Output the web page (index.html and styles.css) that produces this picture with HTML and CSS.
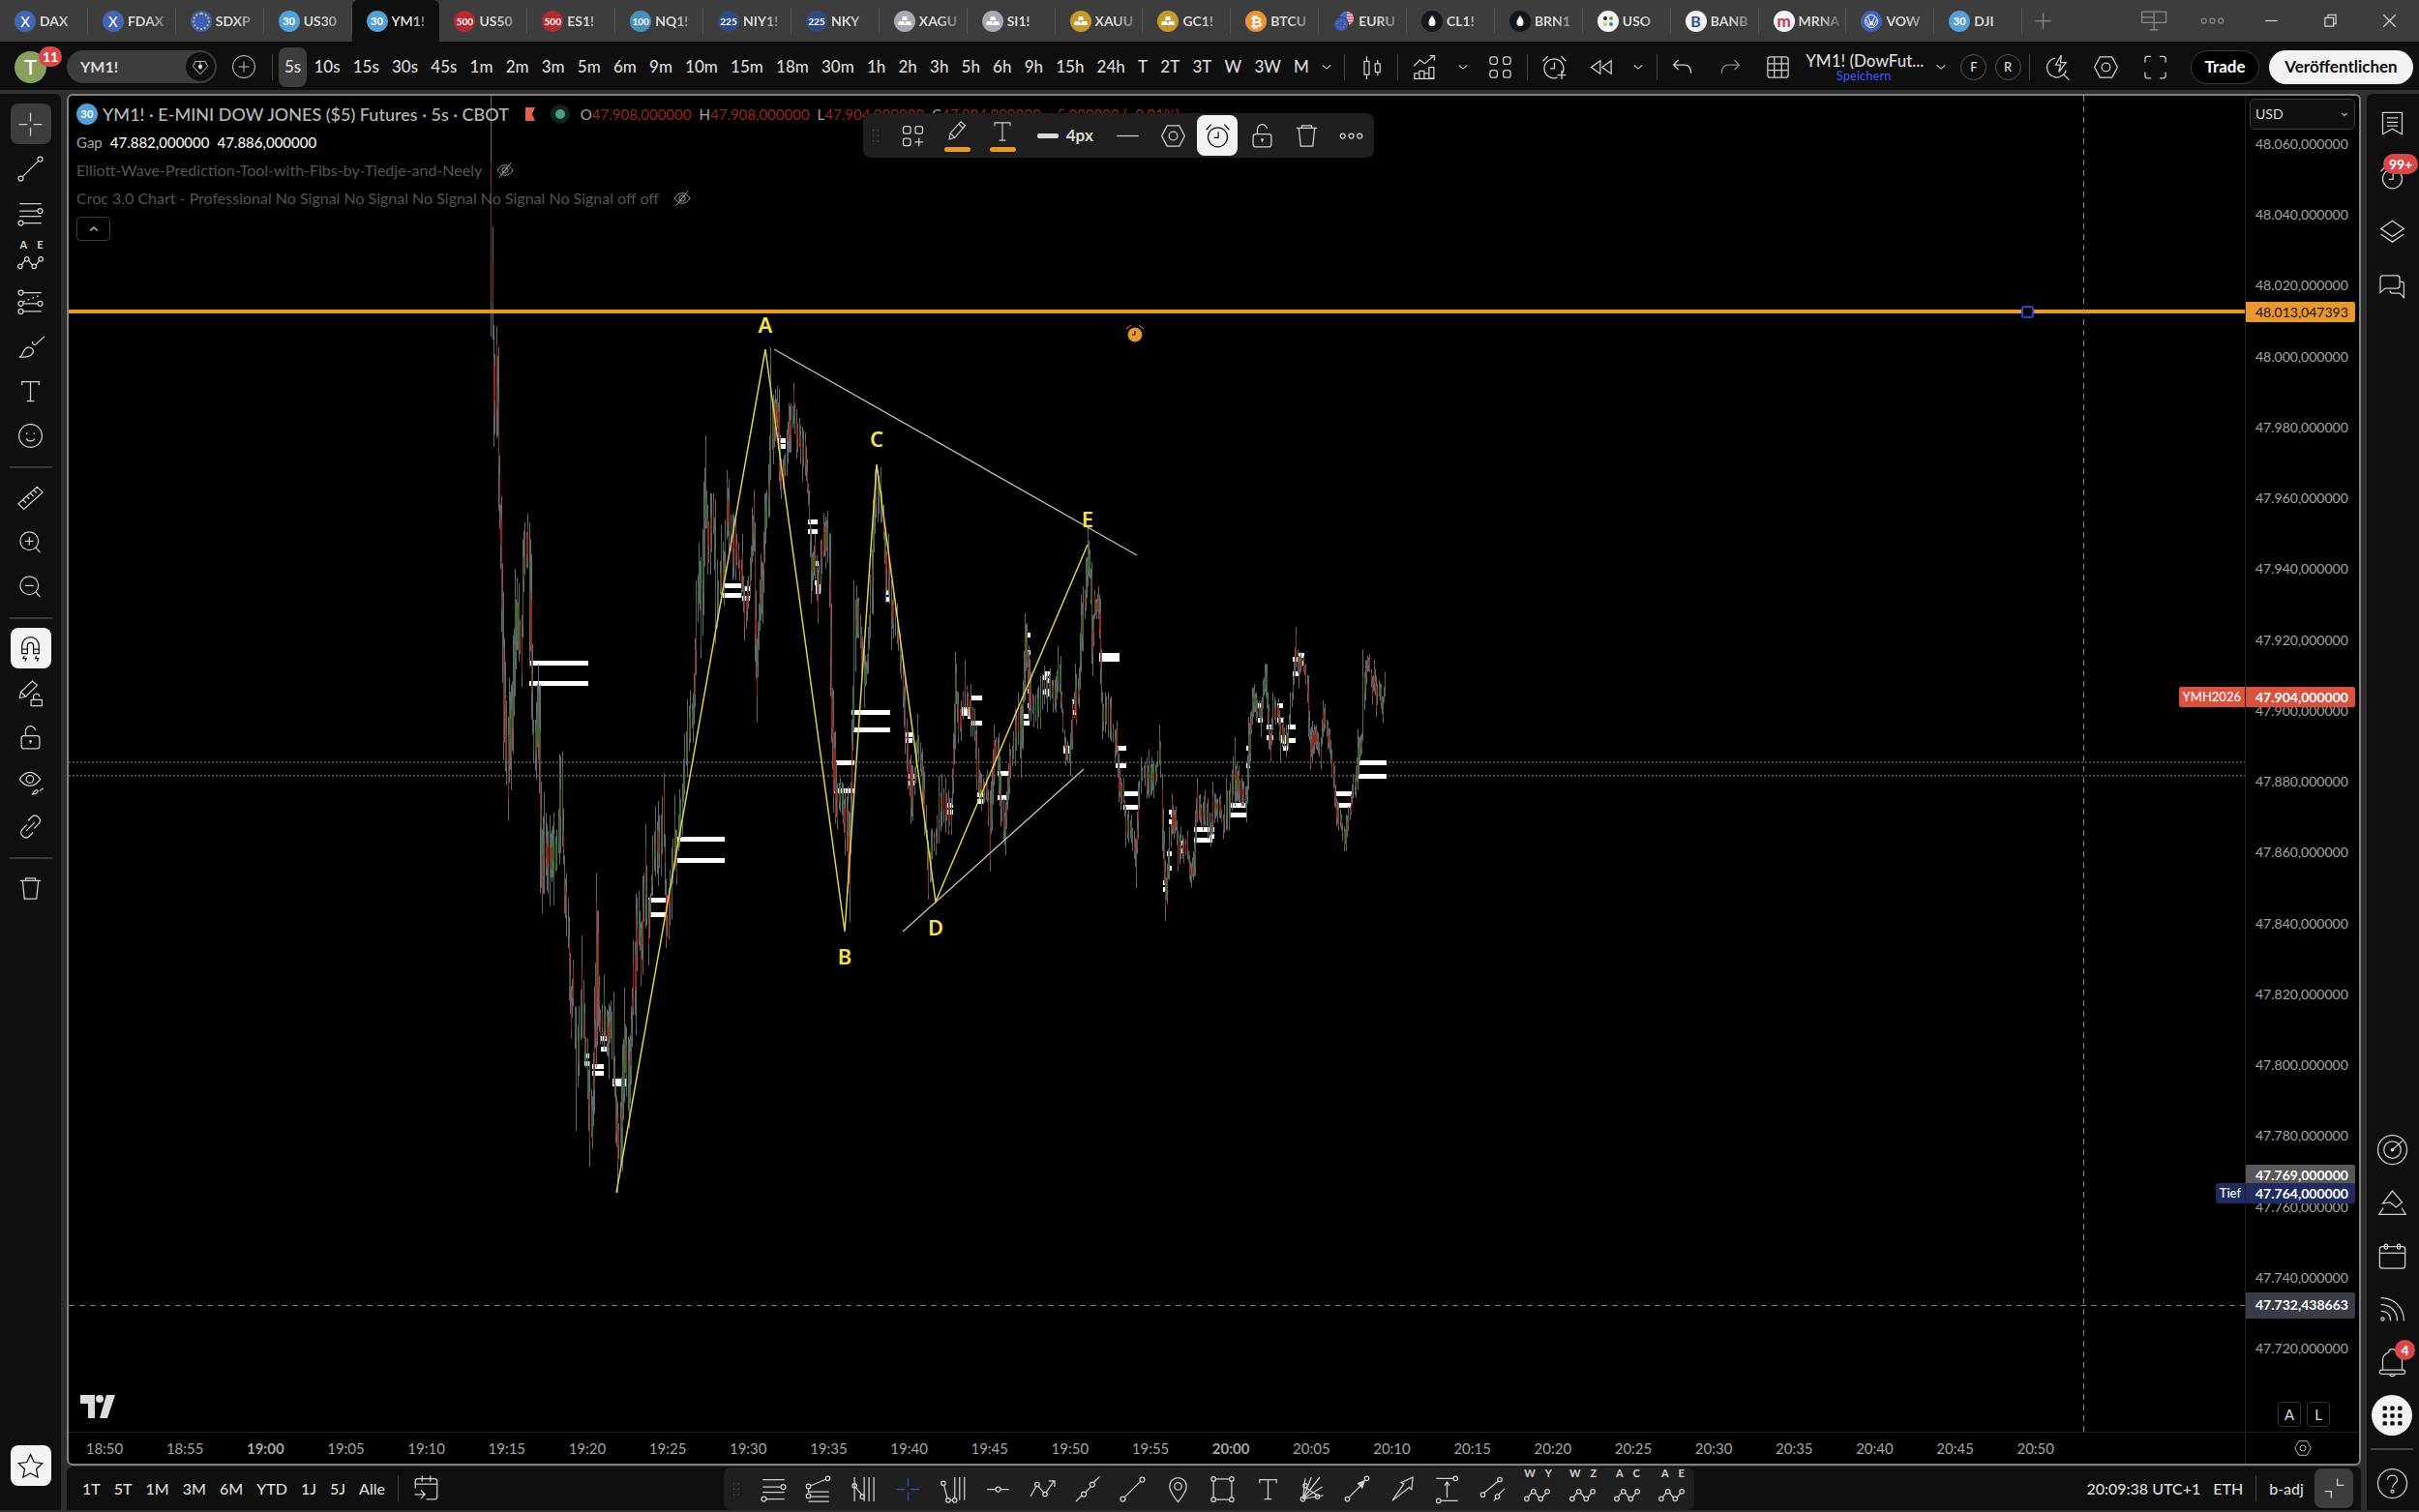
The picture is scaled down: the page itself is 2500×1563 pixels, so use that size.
FILE: index.html
```html
<!DOCTYPE html>
<html lang="de">
<head>
<meta charset="utf-8">
<title>YM1! Chart</title>
<link rel="stylesheet" href="styles.css">
</head>
<body>
<svg class="defs" aria-hidden="true">
  <symbol id="i-chev" viewBox="0 0 28 28"><path d="M10 12.5l4 3.5 4-3.5"/></symbol>
  <symbol id="i-plus" viewBox="0 0 28 28"><path d="M14 7.500v13M7.500 14h13"/></symbol>
  <symbol id="i-dots" viewBox="0 0 28 28"><circle cx="7" cy="14" r="2"/><circle cx="14" cy="14" r="2"/><circle cx="21" cy="14" r="2"/></symbol>
  <symbol id="i-panel" viewBox="0 0 28 28"><path d="M4.500 6.500h20v9h-20zM14.500 6.500v15M11 21.500h7M4.500 11h10"/></symbol>
  <symbol id="i-min" viewBox="0 0 28 28"><path d="M9 14h10"/></symbol>
  <symbol id="i-restore" viewBox="0 0 28 28"><path d="M9.500 11.500h7v7h-7zM12 11.500v-2.500h6.500v7.500h-2"/></symbol>
  <symbol id="i-close" viewBox="0 0 28 28"><path d="M9 9l10 10M19 9L9 19"/></symbol>
  <symbol id="i-gem" viewBox="0 0 28 28"><path d="M8 7.500h12l3 6L14 23 5 13.500zM14 8v9"/><circle cx="14" cy="14" r="2.500" class="f"/></symbol>
  <symbol id="i-candles" viewBox="0 0 28 28"><path d="M8 9h4v11H8zM10 5v4M10 20v4M17 11h4v7h-4zM19 8v3M19 18v3"/></symbol>
  <symbol id="i-ind" viewBox="0 0 28 28"><path d="M5 13l5-5 4 3 7-6M18 4.500h4v4M5.500 23v-4h4v4M9.500 23v-6h4v6M13.500 23v-4h4v4M17.500 23V14h4v9zM5 23.500h17"/></symbol>
  <symbol id="i-grid4" viewBox="0 0 28 28"><rect x="5.500" y="5.500" width="6" height="6" rx="2"/><rect x="16.500" y="5.500" width="6" height="6" rx="2"/><rect x="5.500" y="16.500" width="6" height="6" rx="2"/><rect x="16.500" y="16.500" width="6" height="6" rx="2"/></symbol>
  <symbol id="i-gridplus" viewBox="0 0 28 28"><rect x="6" y="6" width="6" height="6" rx="1.500"/><rect x="16" y="6" width="6" height="6" rx="1.500"/><rect x="6" y="16" width="6" height="6" rx="1.500"/><path d="M19 15.500v7M15.500 19h7"/></symbol>
  <symbol id="i-alarmplus" viewBox="0 0 28 28"><path d="M20.500 19a8 8 0 1 0-4 3.500M4.500 9l4-4M23.500 9l-4-4M14 10v5h-3.500M20 17v7M16.500 20.500h7"/></symbol>
  <symbol id="i-alarm" viewBox="0 0 28 28"><circle cx="14" cy="15" r="8"/><path d="M4.500 9l4-4.500M23.500 9l-4-4.500M14.500 10.500v5H11"/></symbol>
  <symbol id="i-replay" viewBox="0 0 28 28"><path d="M13.500 8.500v11L6 14zM22.500 8.500v11L15 14z"/></symbol>
  <symbol id="i-undo" viewBox="0 0 28 28"><path d="M10 8l-4 4 4 4M6 12h9c4 0 5.500 2.500 5.500 7"/></symbol>
  <symbol id="i-redo" viewBox="0 0 28 28"><path d="M18 8l4 4-4 4M22 12h-9c-4 0-5.500 2.500-5.500 7"/></symbol>
  <symbol id="i-table" viewBox="0 0 28 28"><rect x="5.500" y="5.500" width="17" height="17" rx="2"/><path d="M11 5.500v17M17 5.500v17M5.500 11h17M5.500 16.500h17"/></symbol>
  <symbol id="i-quick" viewBox="0 0 28 28"><path d="M12 6.500a8 8 0 1 0 9 10M18.500 19.500l5 5M17 4l-4.500 8h4L15 18l6-8h-4.500z"/></symbol>
  <symbol id="i-hex" viewBox="0 0 28 28"><path d="M9 5.500h10l4.500 8.500L19 22.500H9L4.500 14z"/><circle cx="14" cy="14" r="3.500"/></symbol>
  <symbol id="i-full" viewBox="0 0 28 28"><path d="M5.500 10V7a2 2 0 0 1 2-2h3M17.500 5h3a2 2 0 0 1 2 2v3M22.500 18v3a2 2 0 0 1-2 2h-3M10.500 23h-3a2 2 0 0 1-2-2v-3"/></symbol>
  <symbol id="i-cross" viewBox="0 0 28 28"><path d="M14 4.500v7M14 16.500v7M4.500 14h7M16.500 14h7"/></symbol>
  <symbol id="i-line" viewBox="0 0 28 28"><circle cx="6" cy="22" r="2"/><circle cx="22" cy="6" r="2"/><path d="M7.500 20.500l13-13"/></symbol>
  <symbol id="i-fib" viewBox="0 0 28 28"><path d="M5 6h18M5 12h15M5 16.500h18M8 22h15"/><circle cx="22" cy="12" r="2"/><circle cx="6" cy="22" r="2"/></symbol>
  <symbol id="i-wave" viewBox="0 0 28 28"><path d="M6.500 20l3-4M12.500 16l3 4M18.500 20l3-4"/><circle cx="5.500" cy="21" r="1.800"/><circle cx="11" cy="15" r="1.800"/><circle cx="17" cy="21" r="1.800"/><circle cx="22.500" cy="15" r="1.800"/></symbol>
  <symbol id="i-proj" viewBox="0 0 28 28"><path d="M8 6h15M8 15h12M8 21.500h15"/><path d="M8 13.500l13-5" stroke-dasharray="1.500 2.500"/><circle cx="6" cy="6" r="2"/><circle cx="6" cy="15" r="2"/><circle cx="22" cy="15" r="2"/><circle cx="6" cy="21.500" r="2"/></symbol>
  <symbol id="i-brush" viewBox="0 0 28 28"><path d="M4.500 22.500c4 0 2.500-8 8-8 3 0 4.500 2 3.500 4.500-1.500 3.500-6.500 3.500-11.500 3.500zM25.500 5.500L18.500 12c-1.500 1-3.500-.5-2.500-2.500"/></symbol>
  <symbol id="i-text" viewBox="0 0 28 28"><path d="M7 9V6h14v3M14 6v16M11 22h6"/></symbol>
  <symbol id="i-smile" viewBox="0 0 28 28"><circle cx="14" cy="14" r="9.500"/><path d="M10.500 16.500c1.500 2.500 5.500 2.500 7 0"/><circle cx="11" cy="12" r=".7" class="f"/><circle cx="17" cy="12" r=".7" class="f"/></symbol>
  <symbol id="i-ruler" viewBox="0 0 28 28"><path d="M4 19L19.500 5l4.500 4.500L8.500 23.500zM8 16l2.500 2.500M11 13l2 2M14 10.500l2.500 2.500M17 8l2 2"/></symbol>
  <symbol id="i-zin" viewBox="0 0 28 28"><circle cx="13" cy="13" r="7.500"/><path d="M18.500 18.500l3.500 4M13 9.500v7M9.500 13h7"/></symbol>
  <symbol id="i-zout" viewBox="0 0 28 28"><circle cx="13" cy="13" r="7.500"/><path d="M18.500 18.500l3.500 4M9.500 13h7"/></symbol>
  <symbol id="i-magnet" viewBox="0 0 28 28"><path d="M7 18v-6.500a7 7 0 0 1 14 0V18h-4.500v-6.500a2.500 2.500 0 0 0-5 0V18zM7 14.500h4.500M16.500 14.500H21M9 20l-1 2h2.500l-1 2.500M19 20l-1 2h2.500l-1 2.500"/></symbol>
  <symbol id="i-penlock" viewBox="0 0 28 28"><path d="M5 18l1-5L15.500 4l4 3.500L10 17zM6 13l4 4M14.500 19.500h9v5h-9zM16.500 19.500v-2a2.500 2.500 0 0 1 5-.5"/></symbol>
  <symbol id="i-lock" viewBox="0 0 28 28"><rect x="6.500" y="12.500" width="15" height="10.500" rx="2"/><path d="M10 12.500V9a4 4 0 0 1 8-1M14 16v3" /><circle cx="14" cy="17" r="1" class="f"/></symbol>
  <symbol id="i-eye" viewBox="0 0 28 28"><path d="M5 11.500c5-7.500 12-7.500 17 0-5 7.500-12 7.500-17 0zM15 24c2 0 1.500-3.500 4-3.500 2 0 1.500 3.500-4 3.500zM24.500 19l-3 2.500"/><circle cx="13.500" cy="11.500" r="3"/></symbol>
  <symbol id="i-link" viewBox="0 0 28 28"><path d="M12 9l3-3c3-3 9 1 6 5.500l-4 4M16 19l-3 3c-3 3-9-1-6-5.500l4-4M10.500 17.500l7-7"/></symbol>
  <symbol id="i-trash" viewBox="0 0 28 28"><path d="M5.500 7.500h17M10 7V5.500h8V7M7.500 8l1.500 14.500h10L20.500 8"/></symbol>
  <symbol id="i-star" viewBox="0 0 28 28"><path d="M14 4.500l3 6.300 6.800.9-5 4.700 1.300 6.900-6.100-3.400-6.100 3.400 1.300-6.900-5-4.700 6.800-.9z"/></symbol>
  <symbol id="i-book" viewBox="0 0 28 28"><path d="M6 5h16v18l-8-4.500L6 23zM9.500 9.500h9M9.500 13h9M9.500 16h9"/></symbol>
  <symbol id="i-layers" viewBox="0 0 28 28"><path d="M14 5l9.500 6.500L14 18l-9.500-6.500zM4.500 16L14 22.500 23.500 16"/></symbol>
  <symbol id="i-chat" viewBox="0 0 28 28"><path d="M6 5.500h12a2 2 0 0 1 2 2V14a2 2 0 0 1-2 2H8l-4 3.500v-12a2 2 0 0 1 2-2zM20 10.500h1.500a2 2 0 0 1 2 2v11l-3.500-3.500h-6a2 2 0 0 1-2-2"/></symbol>
  <symbol id="i-target" viewBox="0 0 28 28"><circle cx="14" cy="14" r="12"/><circle cx="14" cy="14" r="7"/><circle cx="14" cy="14" r="1.500" class="f"/><path d="M14 14l8.500-7.500"/></symbol>
  <symbol id="i-pyr" viewBox="0 0 28 28"><path d="M6 14.500l8-10.500 8 9.500-5 4-5-4zM6.500 18L3 23.500h22L21.500 18"/></symbol>
  <symbol id="i-cal" viewBox="0 0 28 28"><rect x="3.500" y="6" width="21" height="18" rx="2"/><path d="M3.500 11.500h21"/><rect x="7.500" y="4" width="2.500" height="4" rx="1"/><rect x="18" y="4" width="2.500" height="4" rx="1"/></symbol>
  <symbol id="i-rss" viewBox="0 0 28 28"><path d="M4.500 4.500c11 0 19 8 19 19M4.500 10c8 0 13.500 5.500 13.500 13.500M4.500 15.500c5 0 8 3 8 8"/><circle cx="6" cy="22" r="1.300"/></symbol>
  <symbol id="i-bell" viewBox="0 0 28 28"><path d="M6 20v-8c0-4 2.500-5.500 5-6.500 0-3.500 6-3.500 6 0 2.500 1 5 2.500 5 6.500v8M11.500 23.500c1 2.500 4 2.500 5 0"/><rect x="3.500" y="20" width="21" height="3.500" rx="1.700"/></symbol>
  <symbol id="i-apps" viewBox="0 0 28 28"><g class="f"><rect x="6" y="6" width="3.500" height="3.500" rx="1"/><rect x="12.200" y="6" width="3.500" height="3.500" rx="1"/><rect x="18.500" y="6" width="3.500" height="3.500" rx="1"/><rect x="6" y="12.200" width="3.500" height="3.500" rx="1"/><rect x="12.200" y="12.200" width="3.500" height="3.500" rx="1"/><rect x="18.500" y="12.200" width="3.500" height="3.500" rx="1"/><rect x="6" y="18.500" width="3.500" height="3.500" rx="1"/><rect x="12.200" y="18.500" width="3.500" height="3.500" rx="1"/><rect x="18.500" y="18.500" width="3.500" height="3.500" rx="1"/></g></symbol>
  <symbol id="i-help" viewBox="0 0 28 28"><circle cx="14" cy="14" r="12"/><path d="M10 11c0-5 8-5 8 0 0 3-4 3-4 6.500"/><circle cx="14" cy="20.500" r="1.200"/></symbol>
  <symbol id="i-pencil" viewBox="0 0 28 28"><path d="M7 21l1-5.500L17.500 5l4 3.500L12 19.500zM15.500 7l4 4M8 15.500l4 4"/></symbol>
  <symbol id="i-hline" viewBox="0 0 28 28"><path d="M5 14h18"/></symbol>
  <symbol id="i-handle" viewBox="0 0 28 28"><path d="M11.500 7v14M16.500 7v14" stroke-dasharray="1.500 4.500"/></symbol>
  <symbol id="i-goto" viewBox="0 0 28 28"><path d="M5 14V8a2 2 0 0 1 2-2h14a2 2 0 0 1 2 2v13a2 2 0 0 1-2 2h-7M5 10.500h18M10.500 3.500v5M17.500 3.500v5M4.500 19h8M9.500 15.500l3.500 3.500-3.500 3.500"/></symbol>
  <symbol id="i-collapse" viewBox="0 0 28 28"><path d="M16.500 6v5.500H22M6 16.500h5.500V22"/></symbol>
  <symbol id="i-hidden" viewBox="0 0 28 28"><path d="M4 14c5-9 15-9 20 0-5 9-15 9-20 0zM6 24L22 4M11 18l6-8"/><circle cx="14" cy="14" r="4"/></symbol>
  <symbol id="i-fibext" viewBox="0 0 28 28"><path d="M8 11l12-5M6 13v4M8 20h15M6 16h17M6 24h17"/><circle cx="22" cy="5" r="1.800"/><circle cx="6" cy="11.500" r="1.800"/><circle cx="6" cy="19.500" r="1.800"/></symbol>
  <symbol id="i-cyc" viewBox="0 0 28 28"><path d="M6.500 4v20M14.500 4v20M18.500 4v20M22.500 4v20M7.500 12.500l5 6"/><circle cx="6.500" cy="11" r="1.800"/><circle cx="13" cy="20" r="1.800"/></symbol>
  <symbol id="i-pitch" viewBox="0 0 28 28"><path d="M6 10.500l3 11.500M11 23h2M15 22V4M19 4v19M23 4v19"/><circle cx="5.500" cy="9" r="1.800"/><circle cx="9.500" cy="23" r="1.800"/><circle cx="15" cy="23" r="1.800"/></symbol>
  <symbol id="i-hnode" viewBox="0 0 28 28"><path d="M5 14h7M16 14h7"/><circle cx="14" cy="14" r="2"/></symbol>
  <symbol id="i-trend" viewBox="0 0 28 28"><path d="M4 20l5-9M10.500 11.500l5 6M17 16.500L23.500 7M19 7h5v5"/><circle cx="16" cy="18" r="1.800"/><circle cx="9.500" cy="10" r="1.800"/></symbol>
  <symbol id="i-ext" viewBox="0 0 28 28"><path d="M4 24l5-5M12 16.500l4.500-5M19 8l4.500-4.500"/><circle cx="10.500" cy="18" r="2"/><circle cx="17.500" cy="10" r="2"/></symbol>
  <symbol id="i-pin" viewBox="0 0 28 28"><path d="M14 24.500c-4-5-7-9-7-13a7 7 0 0 1 14 0c0 4-3 8-7 13z"/><circle cx="14" cy="11.500" r="3"/></symbol>
  <symbol id="i-rect" viewBox="0 0 28 28"><path d="M8 5.500h12M8 22.500h12M6.500 7v14M21.500 7v14"/><circle cx="6.500" cy="5.500" r="1.800"/><circle cx="21.500" cy="5.500" r="1.800"/><circle cx="6.500" cy="22.500" r="1.800"/><circle cx="21.500" cy="22.500" r="1.800"/></symbol>
  <symbol id="i-fan" viewBox="0 0 28 28"><path d="M6 22L8 5M6 22L13 4M6 22L20 4M6 22L22 12M6 22l17-3M9 13l9 6"/><circle cx="6" cy="22" r="1.800"/><circle cx="8" cy="11" r="1.800"/><circle cx="18" cy="20" r="1.800"/></symbol>
  <symbol id="i-arrow" viewBox="0 0 28 28"><path d="M7.500 20.500L18 10"/><path d="M14 9l7-3-2.500 7.500z" class="f"/><circle cx="6" cy="22" r="1.800"/><circle cx="22" cy="5" r="1.800"/></symbol>
  <symbol id="i-bigarrow" viewBox="0 0 28 28"><path d="M5.500 23.500L15 9.500l-2-1 9.500-4.500-1 10-2-1.500z"/></symbol>
  <symbol id="i-range" viewBox="0 0 28 28"><path d="M5 5h14M9 23.500h14M14 8v13M12 11l2-3 2 3"/><circle cx="21" cy="5" r="1.800"/><circle cx="7" cy="23.500" r="1.800"/></symbol>
  <symbol id="i-chan" viewBox="0 0 28 28"><path d="M7 17L19 7M15 23.500l2-2M19 18.500l5-5"/><circle cx="20" cy="6" r="1.800"/><circle cx="6" cy="18.500" r="1.800"/><circle cx="18" cy="20" r="1.800"/></symbol>
</svg>

<div class="app">
  <nav class="tabs" aria-label="Tabs">
    <a class="tab" href="#"><i class="coin c-dax">X</i><span>DAX</span></a>
    <a class="tab" href="#"><i class="coin c-dax">X</i><span>FDAX</span></a>
    <a class="tab" href="#"><i class="coin c-eu"></i><span>SDXP</span></a>
    <a class="tab" href="#"><i class="coin c-30">30</i><span>US30</span></a>
    <a class="tab on" href="#"><i class="coin c-30">30</i><span>YM1!</span></a>
    <a class="tab" href="#"><i class="coin c-500">500</i><span>US50</span></a>
    <a class="tab" href="#"><i class="coin c-500">500</i><span>ES1!</span></a>
    <a class="tab" href="#"><i class="coin c-100">100</i><span>NQ1!</span></a>
    <a class="tab" href="#"><i class="coin c-225">225</i><span>NIY1!</span></a>
    <a class="tab" href="#"><i class="coin c-225">225</i><span>NKY</span></a>
    <a class="tab" href="#"><i class="coin c-ag"><svg viewBox="0 0 22 22"><path d="M9 6h4l1 4H8zM5 11h5l1 4H4zM12 11h5l1 4h-7z"/></svg></i><span>XAGU</span></a>
    <a class="tab" href="#"><i class="coin c-ag"><svg viewBox="0 0 22 22"><path d="M9 6h4l1 4H8zM5 11h5l1 4H4zM12 11h5l1 4h-7z"/></svg></i><span>SI1!</span></a>
    <a class="tab" href="#"><i class="coin c-au"><svg viewBox="0 0 22 22"><path d="M9 6h4l1 4H8zM5 11h5l1 4H4zM12 11h5l1 4h-7z"/></svg></i><span>XAUU</span></a>
    <a class="tab" href="#"><i class="coin c-au"><svg viewBox="0 0 22 22"><path d="M9 6h4l1 4H8zM5 11h5l1 4H4zM12 11h5l1 4h-7z"/></svg></i><span>GC1!</span></a>
    <a class="tab" href="#"><i class="coin c-btc">₿</i><span>BTCU</span></a>
    <a class="tab" href="#"><i class="coin c-pair"><svg viewBox="0 0 22 22"><circle cx="14" cy="8" r="7" fill="#e9e9f0"/><path d="M14 3h6M14 6h7M14 9h7M10 12h10" stroke="#d5404a" stroke-width="1.500"/><path d="M7 8a7 7 0 0 1 7-7v8H7z" fill="#3d6bd0"/><circle cx="8" cy="14" r="7.500" fill="#3c59b8" stroke="#3d3d3d"/><circle cx="8" cy="14" r="4" fill="none" stroke="#d8c04a" stroke-dasharray="1 2"/></svg></i><span>EURU</span></a>
    <a class="tab" href="#"><i class="coin c-oil"><svg viewBox="0 0 22 22"><path d="M11 5c2 3 3.500 5 3.500 7.500a3.500 3.500 0 0 1-7 0C7.500 10 9 8 11 5z"/></svg></i><span>CL1!</span></a>
    <a class="tab" href="#"><i class="coin c-oil"><svg viewBox="0 0 22 22"><path d="M11 5c2 3 3.500 5 3.500 7.500a3.500 3.500 0 0 1-7 0C7.500 10 9 8 11 5z"/></svg></i><span>BRN1</span></a>
    <a class="tab" href="#"><i class="coin c-white"><svg viewBox="0 0 22 22"><circle cx="8" cy="8" r="2" class="d1"/><circle cx="14" cy="8" r="2" class="d2"/><circle cx="8" cy="14" r="2" class="d3"/><circle cx="14" cy="14" r="2" class="d4"/></svg></i><span>USO</span></a>
    <a class="tab" href="#"><i class="coin c-white c-b">B</i><span>BANB</span></a>
    <a class="tab" href="#"><i class="coin c-white c-m">m</i><span>MRNA</span></a>
    <a class="tab" href="#"><i class="coin c-vw"><svg viewBox="0 0 22 22"><circle cx="11" cy="11" r="6.500"/><path d="M7.500 6l3.500 9 3.500-9M5.500 9l3 7 2.500-5 2.500 5 3-7"/></svg></i><span>VOW</span></a>
    <a class="tab" href="#"><i class="coin c-30">30</i><span>DJI</span></a>
    <button class="ico dim" aria-label="Neuer Tab"><svg><use href="#i-plus"/></svg></button>
    <div class="winbtns">
      <button class="ico dim" aria-label="Layout"><svg><use href="#i-panel"/></svg></button>
      <button class="ico dim" aria-label="Mehr"><svg><use href="#i-dots"/></svg></button>
      <button class="ico" aria-label="Minimieren"><svg><use href="#i-min"/></svg></button>
      <button class="ico" aria-label="Wiederherstellen"><svg><use href="#i-restore"/></svg></button>
      <button class="ico" aria-label="Schließen"><svg><use href="#i-close"/></svg></button>
    </div>
  </nav>

  <header class="top">
    <button class="avatar" aria-label="Profil">T<b class="badge">11</b></button>
    <div class="search"><input type="text" value="YM1!" aria-label="Symbol"><span class="gem"><svg><use href="#i-gem"/></svg></span></div>
    <button class="round" aria-label="Vergleichen"><svg><use href="#i-plus"/></svg></button>
    <i class="vsep"></i>
    <div class="ints">
      <button class="on">5s</button><button>10s</button><button>15s</button><button>30s</button><button>45s</button><button>1m</button><button>2m</button><button>3m</button><button>5m</button><button>6m</button><button>9m</button><button>10m</button><button>15m</button><button>18m</button><button>30m</button><button>1h</button><button>2h</button><button>3h</button><button>5h</button><button>6h</button><button>9h</button><button>15h</button><button>24h</button><button>T</button><button>2T</button><button>3T</button><button>W</button><button>3W</button><button>M</button>
    </div>
    <div class="tools">
      <button class="ico sm" aria-label="Intervalle"><svg><use href="#i-chev"/></svg></button><i class="vsep"></i>
      <button class="ico" aria-label="Kerzen"><svg><use href="#i-candles"/></svg></button><i class="vsep"></i>
      <button class="ico" aria-label="Indikatoren"><svg><use href="#i-ind"/></svg></button>
      <button class="ico sm" aria-label="Favoriten"><svg><use href="#i-chev"/></svg></button>
      <button class="ico" aria-label="Vorlagen"><svg><use href="#i-grid4"/></svg></button><i class="vsep"></i>
      <button class="ico" aria-label="Alarm"><svg><use href="#i-alarmplus"/></svg></button>
      <button class="ico" aria-label="Replay"><svg><use href="#i-replay"/></svg></button>
      <button class="ico sm" aria-label="Replay Menü"><svg><use href="#i-chev"/></svg></button><i class="vsep"></i>
      <button class="ico" aria-label="Rückgängig"><svg><use href="#i-undo"/></svg></button>
      <button class="ico dim" aria-label="Wiederholen"><svg><use href="#i-redo"/></svg></button>
    </div>
    <div class="tools right">
      <button class="ico" aria-label="Layouts"><svg><use href="#i-table"/></svg></button>
      <button class="layout"><span>YM1! (DowFut...</span><small>Speichern</small></button>
      <button class="ico sm" aria-label="Layout Menü"><svg><use href="#i-chev"/></svg></button>
      <button class="letter">F</button><button class="letter">R</button><i class="vsep"></i>
      <button class="ico" aria-label="Schnellsuche"><svg><use href="#i-quick"/></svg></button>
      <button class="ico" aria-label="Einstellungen"><svg><use href="#i-hex"/></svg></button>
      <button class="ico" aria-label="Vollbild"><svg><use href="#i-full"/></svg></button>
    </div>
    <button class="pill dark">Trade</button>
    <button class="pill light">Veröffentlichen</button>
  </header>

  <div class="body">
    <aside class="left">
      <button class="ico on" aria-label="Fadenkreuz"><svg><use href="#i-cross"/></svg></button>
      <button class="ico" aria-label="Trendlinie"><svg><use href="#i-line"/></svg></button>
      <button class="ico" aria-label="Fibonacci"><svg><use href="#i-fib"/></svg></button>
      <button class="ico lettered"><span><b>A</b><b>E</b></span><svg><use href="#i-wave"/></svg></button>
      <button class="ico" aria-label="Prognose"><svg><use href="#i-proj"/></svg></button>
      <button class="ico" aria-label="Pinsel"><svg><use href="#i-brush"/></svg></button>
      <button class="ico" aria-label="Text"><svg><use href="#i-text"/></svg></button>
      <button class="ico" aria-label="Symbole"><svg><use href="#i-smile"/></svg></button>
      <hr>
      <button class="ico" aria-label="Messen"><svg><use href="#i-ruler"/></svg></button>
      <button class="ico" aria-label="Vergrößern"><svg><use href="#i-zin"/></svg></button>
      <button class="ico" aria-label="Verkleinern"><svg><use href="#i-zout"/></svg></button>
      <hr>
      <button class="ico inv" aria-label="Magnet"><svg><use href="#i-magnet"/></svg></button>
      <button class="ico" aria-label="Zeichenmodus"><svg><use href="#i-penlock"/></svg></button>
      <button class="ico" aria-label="Sperren"><svg><use href="#i-lock"/></svg></button>
      <button class="ico" aria-label="Ausblenden"><svg><use href="#i-eye"/></svg></button>
      <button class="ico" aria-label="Verknüpfen"><svg><use href="#i-link"/></svg></button>
      <hr>
      <button class="ico" aria-label="Löschen"><svg><use href="#i-trash"/></svg></button>
      <button class="ico inv last" aria-label="Favoriten"><svg><use href="#i-star"/></svg></button>
    </aside>

    <main class="center">
      <section class="chart">
        <div class="pane">
          <svg class="plot">
            <g transform="translate(-71 -99)">
              <g class="hdots"><path d="M71 788H2321M71 802H2321"/></g>
              <g id="gaps"></g>
              <g id="candles"></g>
              <path class="wave" d="M637 1233L791 361 873 963 906 480 967 932 1124 563"/>
              <path class="trend" d="M800 361L1175 574M933 963L1120 795"/>
              <path class="alertline" d="M71 322H2321"/>
              <rect class="grip" x="2090" y="317" width="11" height="11" rx="2"/>
              <g class="clock"><circle cx="1173" cy="346" r="7"/><path d="M1164 340l5-4M1182 340l-5-4"/><path class="hand" d="M1173 342v4h-3"/></g>
              <path class="cross" d="M2153.500 99V1481M71 1349.500H2321"/>
              <g class="marks"><text x="791" y="344">A</text><text x="873" y="997">B</text><text x="906" y="462">C</text><text x="967" y="967">D</text><text x="1124" y="545">E</text></g>
            </g>
          </svg>
          <div class="legend">
            <div class="row title"><i class="coin c-30">30</i><h1>YM1! · E-MINI DOW JONES ($5) Futures · 5s · CBOT</h1><svg class="flag" viewBox="0 0 10 14"><path d="M0 0h10L7 7l3 7H0z"/></svg><i class="live"></i>
              <p class="ohlc"><span>O<em>47.908,000000</em></span><span>H<em>47.908,000000</em></span><span>L<em>47.904,000000</em></span><span>C<em>47.904,000000</em></span><em>−5,000000 (−0,01%)</em></p></div>
            <div class="row gap">Gap<b>47.882,000000</b><b>47.886,000000</b></div>
            <div class="row off">Elliott-Wave-Prediction-Tool-with-Fibs-by-Tiedje-and-Neely<svg><use href="#i-hidden"/></svg></div>
            <div class="row off">Croc 3.0 Chart - Professional No Signal No Signal No Signal No Signal No Signal off off<svg><use href="#i-hidden"/></svg></div>
            <button class="fold" aria-label="Legende einklappen"><svg><use href="#i-chev"/></svg></button>
          </div>
          <div class="drawbar">
            <i class="ico grab"><svg><use href="#i-handle"/></svg></i>
            <button class="ico" aria-label="Vorlagen"><svg><use href="#i-gridplus"/></svg></button>
            <button class="ico under" aria-label="Linienfarbe"><svg><use href="#i-pencil"/></svg></button>
            <button class="ico under" aria-label="Textfarbe"><svg><use href="#i-text"/></svg></button>
            <button class="width"><i></i>4px</button>
            <button class="ico" aria-label="Linienart"><svg><use href="#i-hline"/></svg></button>
            <button class="ico" aria-label="Einstellungen"><svg><use href="#i-hex"/></svg></button>
            <button class="ico inv" aria-label="Alarm"><svg><use href="#i-alarm"/></svg></button>
            <button class="ico" aria-label="Sperren"><svg><use href="#i-lock"/></svg></button>
            <button class="ico" aria-label="Löschen"><svg><use href="#i-trash"/></svg></button>
            <button class="ico" aria-label="Mehr"><svg><use href="#i-dots"/></svg></button>
          </div>
          <svg class="tv" viewBox="0 0 38 28"><path d="M1 2h15v24H9V11H1z"/><circle cx="21" cy="6" r="4"/><path d="M28 2h9l-8 24h-8z"/></svg>
        </div>
        <div class="axis">
          <div class="cur"><select aria-label="Währung"><option>USD</option></select><svg><use href="#i-chev"/></svg></div>
          <ol class="prices">
            <li>48.060,000000</li><li>48.040,000000</li><li>48.020,000000</li><li>48.000,000000</li><li>47.980,000000</li><li>47.960,000000</li><li>47.940,000000</li><li>47.920,000000</li><li>47.900,000000</li><li>47.880,000000</li><li>47.860,000000</li><li>47.840,000000</li><li>47.820,000000</li><li>47.800,000000</li><li>47.780,000000</li><li>47.760,000000</li><li>47.740,000000</li><li>47.720,000000</li>
          </ol>
          <div class="modes"><button>A</button><button>L</button></div>
          <div class="tag t-alert">48.013,047393</div>
          <div class="tag t-last"><span>YMH2026</span>47.904,000000</div>
          <div class="tag t-prev">47.769,000000</div>
          <div class="tag t-low"><span>Tief</span>47.764,000000</div>
          <div class="tag t-cross">47.732,438663</div>
        </div>
        <ol class="times">
          <li>18:50</li><li>18:55</li><li><b>19:00</b></li><li>19:05</li><li>19:10</li><li>19:15</li><li>19:20</li><li>19:25</li><li>19:30</li><li>19:35</li><li>19:40</li><li>19:45</li><li>19:50</li><li>19:55</li><li><b>20:00</b></li><li>20:05</li><li>20:10</li><li>20:15</li><li>20:20</li><li>20:25</li><li>20:30</li><li>20:35</li><li>20:40</li><li>20:45</li><li>20:50</li>
        </ol>
        <button class="axisset" aria-label="Achsen"><svg><use href="#i-hex"/></svg></button>
      </section>

      <footer class="bottom">
        <div class="ranges"><button>1T</button><button>5T</button><button>1M</button><button>3M</button><button>6M</button><button>YTD</button><button>1J</button><button>5J</button><button>Alle</button></div>
        <i class="vsep"></i>
        <button class="ico" aria-label="Gehe zu"><svg><use href="#i-goto"/></svg></button>
        <div class="session"><button>20:09:38 UTC+1</button><button>ETH</button><i class="vsep"></i><button>b-adj</button></div>
        <button class="ico on" aria-label="Panel"><svg><use href="#i-collapse"/></svg></button>
        <div class="favs">
          <i class="ico grab"><svg><use href="#i-handle"/></svg></i>
          <button class="ico" aria-label="Fibonacci"><svg><use href="#i-fib"/></svg></button>
          <button class="ico" aria-label="Fib Extension"><svg><use href="#i-fibext"/></svg></button>
          <button class="ico" aria-label="Zeitzonen"><svg><use href="#i-cyc"/></svg></button>
          <button class="ico blue" aria-label="Fadenkreuz"><svg><use href="#i-cross"/></svg></button>
          <button class="ico" aria-label="Fib Zeit"><svg><use href="#i-pitch"/></svg></button>
          <button class="ico" aria-label="Horizontale"><svg><use href="#i-hnode"/></svg></button>
          <button class="ico" aria-label="Pfad"><svg><use href="#i-trend"/></svg></button>
          <button class="ico" aria-label="Erweiterte Linie"><svg><use href="#i-ext"/></svg></button>
          <button class="ico" aria-label="Trendlinie"><svg><use href="#i-line"/></svg></button>
          <button class="ico" aria-label="Pin"><svg><use href="#i-pin"/></svg></button>
          <button class="ico" aria-label="Rechteck"><svg><use href="#i-rect"/></svg></button>
          <button class="ico" aria-label="Text"><svg><use href="#i-text"/></svg></button>
          <button class="ico" aria-label="Fächer"><svg><use href="#i-fan"/></svg></button>
          <button class="ico" aria-label="Pfeil"><svg><use href="#i-arrow"/></svg></button>
          <button class="ico" aria-label="Pfeilmarker"><svg><use href="#i-bigarrow"/></svg></button>
          <button class="ico" aria-label="Preisbereich"><svg><use href="#i-range"/></svg></button>
          <button class="ico" aria-label="Kanal"><svg><use href="#i-chan"/></svg></button>
          <button class="ico lettered"><span><b>W</b><b>Y</b></span><svg><use href="#i-wave"/></svg></button>
          <button class="ico lettered"><span><b>W</b><b>Z</b></span><svg><use href="#i-wave"/></svg></button>
          <button class="ico lettered"><span><b>A</b><b>C</b></span><svg><use href="#i-wave"/></svg></button>
          <button class="ico lettered"><span><b>A</b><b>E</b></span><svg><use href="#i-wave"/></svg></button>
        </div>
      </footer>
    </main>

    <aside class="side">
      <button class="ico" aria-label="Watchlist"><svg><use href="#i-book"/></svg></button>
      <button class="ico" aria-label="Alarme"><svg><use href="#i-alarm"/></svg><b class="badge">99+</b></button>
      <button class="ico" aria-label="Objekte"><svg><use href="#i-layers"/></svg></button>
      <button class="ico" aria-label="Chats"><svg><use href="#i-chat"/></svg></button>
      <div class="low">
        <button class="ico" aria-label="Screener"><svg><use href="#i-target"/></svg></button>
        <button class="ico" aria-label="Pine"><svg><use href="#i-pyr"/></svg></button>
        <button class="ico" aria-label="Kalender"><svg><use href="#i-cal"/></svg></button>
        <button class="ico" aria-label="News"><svg><use href="#i-rss"/></svg></button>
        <button class="ico" aria-label="Mitteilungen"><svg><use href="#i-bell"/></svg><b class="badge">4</b></button>
        <button class="ico apps" aria-label="Produkte"><svg><use href="#i-apps"/></svg></button>
        <hr>
        <button class="ico" aria-label="Hilfe"><svg><use href="#i-help"/></svg></button>
      </div>
    </aside>
  </div>
</div>
<script src="chart.js"></script>
</body>
</html>
```

FILE: styles.css
```css
* { box-sizing: border-box; }
html, body { height: 100%; margin: 0; }
body { background: #2e2e2e; color: #dbdbdb; font: 16px/20px Lato, "Liberation Sans", sans-serif; overflow: hidden; }
button, input, select { font: inherit; color: inherit; background: none; border: 0; padding: 0; margin: 0; }
a { color: inherit; text-decoration: none; }
i, em { font-style: normal; }
ol { list-style: none; margin: 0; padding: 0; }
hr { border: 0; height: 2px; background: #3a3a3a; margin: 0; width: 44px; }
.defs { position: absolute; width: 0; height: 0; }
symbol, use { overflow: visible; }
svg { fill: none; stroke: currentColor; stroke-width: 1; }
.f { fill: currentColor; stroke: none; }

.app { height: 100%; display: flex; flex-direction: column; padding-bottom: 2px; }
.ico { width: 42px; height: 42px; flex: none; display: flex; align-items: center; justify-content: center; border-radius: 8px; color: #cfcfcf; position: relative; }
.ico svg { width: 35px; height: 35px; display: block; }
.ico.dim { color: #8a8a8a; }
.ico.on { background: #3d3d3d; }
.ico.inv { background: #f2f2f2; color: #111; }
.vsep { width: 1px; height: 27px; background: #434343; flex: none; }
.badge { position: absolute; background: #d94848; color: #fff; border-radius: 11px; height: 21px; min-width: 21px; padding: 0 4px; font-size: 14px; line-height: 21px; text-align: center; }

/* window tabs */
.tabs { height: 43px; flex: none; display: flex; align-items: center; background: #3d3d3d; font-size: 14px; font-weight: 700; }
.tab { width: 0; flex: 90 1 0; height: 43px; display: flex; align-items: center; gap: 4px; padding: 0 0 0 15px; position: relative; }
.tab::after { content: ""; position: absolute; right: 0; top: 8px; height: 27px; width: 1px; background: #555; }
.tab span { flex: 1; margin-right: 7px; white-space: nowrap; -webkit-mask-image: linear-gradient(90deg, #000 20px, transparent 50px); mask-image: linear-gradient(90deg, #000 20px, transparent 50px); }
.tab.on { background: #0f0f0f; border-radius: 6px 6px 0 0; }
.tab.on::after { display: none; }
.coin { width: 22px; height: 22px; border-radius: 50%; flex: none; display: flex; align-items: center; justify-content: center; color: #fff; font: 700 11px/22px Lato, sans-serif; }
.coin svg { width: 22px; height: 22px; fill: #fff; stroke: none; }
.c-dax { background: #4466b0; font-size: 15px; font-weight: 400; }
.c-eu { background: #3c5fb8; }
.c-eu::before { content: ""; width: 14px; height: 14px; border-radius: 50%; border: 2px dotted #d8c04a; }
.c-30 { background: #559fd4; }
.c-500 { background: #b02c34; font-size: 10px; }
.c-100 { background: #4a8fb9; font-size: 10px; }
.c-225 { background: #2f4a80; font-size: 10px; }
.c-ag { background: #aaa8b4; }
.c-au { background: #c49a2c; }
.c-btc { background: #e8953a; font-size: 15px; }
.c-oil { background: #14171c; }
.c-white { background: #f3f4fa; }
.d1 { fill: #222; }
.d2 { fill: #57a83c; }
.d3 { fill: #e8c32c; }
.d4 { fill: #2f7fd0; }
.c-b { color: #2c4a90; font-size: 16px; }
.c-m { color: #c8343c; font-size: 17px; line-height: 18px; }
.c-vw { background: #405fb8; }
.c-vw svg { fill: none; stroke: #fff; }
.winbtns { display: flex; align-items: center; gap: 19px; margin-left: 72px; flex: none; padding-right: 10px; }

/* header */
.top { height: 50px; flex: none; display: flex; align-items: center; background: #0f0f0f; padding: 2px 6px 0 15px; font-size: 17px; font-weight: 500; }
.avatar { position: relative; width: 33px; height: 33px; border-radius: 50%; background: #8a9f60; color: #fff; font-size: 22px; margin-right: 21px; flex: none; }
.avatar .badge { left: 25px; top: -5px; }
.search { width: 155px; height: 34px; border-radius: 17px; background: #3d3d3d; display: flex; align-items: center; padding: 0 2px 0 14px; flex: none; }
.search input { flex: 1; min-width: 0; font-weight: 700; font-size: 16px; }
.gem { width: 30px; height: 30px; border-radius: 50%; background: #0f0f0f; display: flex; align-items: center; justify-content: center; }
.gem svg { width: 24px; height: 24px; }
.round { width: 24px; height: 24px; border-radius: 50%; border: 1px solid #cfcfcf; margin: 0 17px 0 16px; flex: none; display: flex; align-items: center; justify-content: center; }
.round svg { width: 24px; height: 24px; flex: none; }
.ints { display: flex; justify-content: space-between; flex: none; width: 1071px; margin-left: 6px; }
.ints button { height: 41px; padding: 0 6px; border-radius: 8px; }
.ints .on { background: #3d3d3d; }
.tools { display: flex; align-items: center; justify-content: space-between; flex: 0 1 450px; }
.tools.right { flex: 1 1 430px; padding-left: 7px; padding-right: 16px; }
.ico.sm { width: 24px; }
.ico.sm svg { width: 30px; height: 30px; flex: none; }
.layout { width: 120px; text-align: center; line-height: 18px; }
.layout span, .layout small { display: block; white-space: nowrap; }
.layout small { font-size: 13px; line-height: 13px; color: #3b50ea; }
.letter { width: 27px; height: 27px; border-radius: 50%; border: 1px solid #555; font-size: 13px; line-height: 24px; flex: none; }
.pill { height: 35px; border-radius: 18px; font-size: 17px; font-weight: 700; flex: none; }
.pill.dark { width: 71px; background: #000; border: 1px solid #3d3d3d; color: #fff; margin-right: 10px; }
.pill.light { width: 149px; background: #f2f2f2; color: #0f0f0f; }

/* body */
.body { flex: 1; min-height: 0; display: flex; padding-top: 4px; }
.left { width: 63px; flex: none; background: #0f0f0f; display: flex; flex-direction: column; align-items: center; gap: 4px; padding: 10px 0 25px; border-radius: 0 6px 0 0; }
.left hr { margin: 7px 0 5px; }
.left .last { margin-top: auto; }
.lettered span { position: absolute; top: 2px; left: 2px; right: 0; display: flex; justify-content: center; gap: 10px; font-size: 11px; line-height: 12px; }
.center { flex: 1; min-width: 0; margin-left: 6px; display: flex; flex-direction: column; gap: 1px; }
.side { width: 54px; flex: none; margin-left: 6px; background: #0f0f0f; display: flex; flex-direction: column; align-items: center; gap: 14px; padding: 9px 2px 7px 0; border-radius: 6px 0 0 0; }
.side .badge { left: 12px; top: -3px; padding: 0 6px; }
.low { margin-top: auto; display: flex; flex-direction: column; align-items: center; gap: 13px; }
.low .badge { left: 24px; top: -2px; }
.low hr { background: #434343; }
.low .apps { background: #f2f2f2; color: #0f0f0f; border-radius: 50%; }

/* chart */
.chart { flex: 1; min-height: 0; background: #000; border: 2px solid #808080; border-radius: 6px; display: grid; grid-template: 1fr 33px / 1fr 118px; }
.pane { position: relative; overflow: hidden; min-width: 0; min-height: 0; }
.plot { position: absolute; inset: 0; width: 100%; height: 100%; }
.hdots path { stroke: #8c8c8c; stroke-dasharray: 2 2; }
.wave { stroke: #e0d048; stroke-width: 1.5; }
.trend { stroke: #c4c4c4; stroke-width: 1.25; }
.alertline { stroke: #e8982c; stroke-width: 4; }
.grip { fill: #000; stroke: #3340d0; stroke-width: 2; }
.clock { fill: #e8982c; stroke: #e8982c; }
.clock .hand { stroke: #000; fill: none; }
.cross { stroke: #7d8088; stroke-dasharray: 6 5; }
.marks { fill: #f2e04c; stroke: none; font: 600 22px/22px "Noto Sans", sans-serif; text-anchor: middle; }
.k-w { stroke: #656770; }
.k-g { stroke: #356b2c; }
.k-r { stroke: #97251a; }
#gaps path { stroke: #fff; stroke-width: 5; }
.legend { position: relative; padding: 4px 0 0 8px; font-size: 16px; color: #a5a5a5; display: flex; flex-direction: column; align-items: flex-start; }
.row { display: flex; align-items: center; height: 29px; white-space: nowrap; }
.row b { color: #f0f0f0; font-weight: 500; margin-left: 8px; }
.row.gap { font-size: 15px; }
.row.off { color: #555; }
.row.off svg { width: 22px; height: 22px; margin-left: 13px; color: #bdbdbd; }
.title h1 { margin: 0 0 0 5px; font-size: 18px; font-weight: 500; color: #b8b8b8; }
.flag { width: 12px; height: 14px; margin-left: 16px; fill: #e8604f; stroke: none; }
.live { width: 20px; height: 20px; border-radius: 50%; background: #4c9f85; border: 5px solid #10251e; margin-left: 15px; }
.ohlc { margin: 0 0 0 11px; display: flex; gap: 8px; font-size: 15px; }
.ohlc em { color: #96281e; }
.fold { width: 35px; height: 25px; border: 1px solid #3d3d3d; border-radius: 4px; margin-top: 5px; display: flex; align-items: center; justify-content: center; }
.fold svg { width: 26px; height: 26px; transform: rotate(180deg); stroke-width: 2; }
.drawbar { position: absolute; left: 821px; top: 18px; width: 528px; height: 46px; border-radius: 8px; background: #1f1f1f; display: flex; align-items: center; justify-content: space-between; padding: 0 2px 0 0; }
.grab { width: 26px; color: #6a6a6a; }
.under svg { margin-top: -8px; width: 32px; height: 32px; }
.under::after { content: ""; position: absolute; left: 8px; right: 7px; bottom: 4px; height: 5px; border-radius: 3px; background: #e8982c; }
.width { display: flex; align-items: center; justify-content: center; gap: 8px; width: 80px; font-size: 17px; font-weight: 700; }
.width i { width: 22px; height: 5px; border-radius: 2px; background: #dbdbdb; }
.tv { position: absolute; left: 11px; bottom: 12px; width: 38px; height: 28px; fill: #dbdbdb; stroke: none; }
.axis { position: relative; border-left: 1px solid #1f1f1f; display: flex; flex-direction: column; font-size: 14px; color: #a5a5a5; }
.cur { height: 32px; margin: 3px 4px 0; border: 1px solid #3d3d3d; border-radius: 5px; background: #0f0f0f; display: flex; align-items: center; position: relative; }
.cur select { flex: 1; appearance: none; padding-left: 5px; color: #dbdbdb; }
.cur svg { position: absolute; right: 0; width: 20px; height: 20px; stroke-width: 2; }
.prices { flex: 1; margin: 5px 0 45px; display: flex; flex-direction: column; justify-content: space-between; }
.prices li { padding-left: 10px; }
.modes { display: flex; gap: 6px; margin: 0 0 5px 33px; }
.modes button { width: 24px; height: 26px; border: 1px solid #333; border-radius: 4px; color: #dbdbdb; font-size: 15px; }
.tag { position: absolute; left: 0; right: 4px; padding-left: 10px; height: 21px; line-height: 21px; color: #fff; border-radius: 0 2px 2px 0; font-weight: 700; }
.tag span { position: absolute; right: 100%; padding: 0 4px; background: inherit; margin-right: 1px; border-radius: 2px 0 0 2px; font-weight: 500; font-size: 13px; }
.t-alert { top: 213px; background: #e8982c; color: #1a1204; font-weight: 400; }
.t-last { top: 611px; background: #da5140; }
.t-prev { top: 1105px; background: #585858; }
.t-low { top: 1124px; background: #202c60; }
.t-cross { top: 1237px; height: 27px; line-height: 26px; background: #3a3c47; }
.times { border-top: 1px solid #1f1f1f; display: flex; justify-content: space-between; padding: 6px 186px 0 7px; font-size: 15px; color: #a5a5a5; }
.times li { width: 60px; text-align: center; }
.axisset { border: solid #1f1f1f; border-width: 1px 0 0 1px; display: flex; align-items: center; justify-content: center; }
.axisset svg { width: 24px; height: 24px; color: #cfcfcf; }

/* bottom bar */
.bottom { position: relative; height: 45px; flex: none; background: #0f0f0f; border-radius: 6px 6px 0 0; display: flex; align-items: center; padding: 0 8px 0 16px; font-size: 16px; font-weight: 500; }
.ranges { display: flex; gap: 14px; margin-right: 13px; }
.bottom > .ico { margin-left: 7px; }
.session { display: flex; align-items: center; gap: 13px; margin-left: auto; }
.bottom .ico.on { margin-left: 11px; width: 40px; height: 41px; }
.favs { position: absolute; left: 679px; top: 1px; width: 1003px; height: 44px; border-radius: 8px; background: #1f1f1f; display: flex; align-items: center; justify-content: space-between; padding: 0 2px 0 0; }
.favs .lettered span { top: -1px; }
.favs .lettered svg { margin-top: 3px; }
.blue { color: #3a4ed0; }
```

FILE: chart.js
```js
// Bar ranges as [x, high, low], stored per block with its own origin and scale.
const blocks = [
  { x: 480, y: 300, sy: 0.5995, bars: [
    [80,-335,0],[82,-190,80],[86,-110,85],[90,60,270],[98,62,255],[104,98,380],[108,285,412],[114,355,590],[119,520,810],[126,640,830],[134,735,915],[138,668,850],[144,680,862],[150,595,800],[156,480,700],[163,495,620],[168,505,640],[176,560,685],[180,430,600],[186,400,490],[196,385,480],[200,400,650],[206,455,740],[214,740,815],[222,710,845],[228,645,810],[234,680,1040],[240,930,1075],[247,865,1040],[255,920,1035],[263,905,1062],[270,930,1020],[277,900,1060],[285,930,1000],[294,800,990],[302,795,960],[308,975,1075],[316,1005,1115],[324,1080,1225],[329,1200,1290],[337,1155,1235],[345,1235,1450],[355,1235,1355],[363,1112,1290],[372,1230,1330],[380,1290,1395],[388,1330,1512],[395,1390,1480],[402,1200,1420],[407,1005,1340],[413,1070,1270],[420,1240,1300],[431,1180,1310],[440,1240,1320],[446,1230,1360],[452,1225,1290],[461,1210,1370],[467,1370,1470],[474,1400,1557],[482,1400,1520],[490,1300,1520],[495,1203,1400],[502,1270,1390],[510,1290,1445],[517,1235,1370],[523,1120,1250],[531,1040,1285],[539,1035,1130],[545,1090,1200],[552,1010,1180],[560,920,1100],[569,1050,1165],[575,1040,1080],[583,940,1045],[592,890,1010],[600,880,1028],[608,905,1010],[618,832,960],[624,1015,1135],[632,1030,1120],[641,960,1085],[650,870,1000],[658,930,1025],[666,860,960],[674,850,940],[682,765,870],[690,705,840],[699,690,780],[708,695,780],[713,600,720],[718,500,640],[727,435,540],[733,460,635],[740,330,560],[747,250,410],[753,370,490],[761,350,490],[770,350,420],[778,360,610],[787,500,570],[796,405,540],[804,450,545],[812,310,430],[820,325,450],[830,385,500],[839,390,500],[848,435,480],[857,465,530],[862,420,520],[868,510,605],[876,500,570],[884,460,530],[890,375,470],[897,345,450],[901,400,640],[906,600,745],[911,540,620],[918,455,570],[924,470,575],[930,350,470],[937,345,410],[944,250,390],[949,98,320],[956,180,300],[963,170,260],[970,165,240],[976,170,330],[982,290,360],[990,285,350],[998,240,320],[1005,195,280],[1012,195,280],[1019,160,230],[1028,205,290],[1037,220,270],[1046,235,330],[1056,245,320],[1062,290,350],[1067,345,400],[1074,410,540],[1080,450,500],[1087,420,500],[1095,480,575],[1103,430,520],[1112,385,460],[1120,390,480],[1126,380,470],[1133,420,700],[1138,575,780],[1144,690,900],[1150,760,920],[1156,850,930],[1165,840,900],[1173,850,920],[1180,860,975],[1187,855,1040],[1193,900,1090],[1200,740,920],[1207,500,760],[1214,510,600],[1222,530,600],[1230,580,660],[1238,610,720],[1245,640,680],[1252,580,660],[1258,490,600],[1265,360,560],[1272,310,420],[1280,310,400],[1290,305,400],[1298,370,430],[1305,410,540],[1313,420,530],[1322,500,620],[1330,515,600],[1340,540,610],[1350,590,660],[1358,640,720],[1366,670,800],[1375,760,860],[1382,800,920],[1390,820,915],[1397,780,850],[1403,730,800],[1412,780,830],[1420,790,880],[1426,830,940],[1433,930,1000],[1438,960,1050],[1445,930,1020]],
    gaps: [[201,383,642,678],[653,807,946,983],[569,630,1051,1076],[802,857,508,526],[860,884,514,531],[972,997,259,269],[1065,1095,398,415],[1086,1098,471,503],[1089,1103,510,519],[1146,1208,814,862],[1200,1320,727,758],[1307,1321,520,532],[1366,1388,765,776],[1375,1395,838,849],[373,388,1319,1332],[396,432,1338,1350],[423,440,1290,1307],[459,500,1362,1368]] },
  { x: 960, y: 320, sy: 0.4209, bars: [
    [10,1275,1350],[20,1275,1340],[30,1145,1310],[40,1140,1270],[50,1150,1285],[60,1180,1290],[68,1200,1290],[74,1040,1190],[80,840,1080],[84,870,970],[90,940,1065],[100,960,1060],[112,860,980],[120,940,1000],[130,920,1050],[140,980,1060],[148,1020,1180],[155,1130,1200],[163,1140,1230],[172,1160,1210],[180,1130,1210],[188,1180,1380],[195,1120,1280],[202,1020,1170],[208,1050,1110],[215,1040,1190],[222,1140,1270],[230,1200,1305],[237,1210,1340],[243,1150,1230],[248,1065,1190],[258,1070,1120],[266,980,1120],[276,940,1070],[286,970,1150],[292,910,1080],[297,745,960],[303,770,880],[309,825,1010],[315,890,1010],[325,950,1025],[335,930,1030],[345,900,1030],[357,875,970],[367,890,990],[375,880,960],[385,910,990],[393,900,990],[400,825,940],[407,850,980],[414,980,1040],[424,1050,1120],[430,1060,1110],[438,1040,1145],[445,960,1080],[452,870,990],[457,900,1020],[465,880,980],[472,700,890],[478,680,840],[485,610,740],[493,535,680],[498,590,660],[503,620,870],[507,750,900],[514,690,760],[520,710,760],[526,680,760],[531,710,920],[537,940,1055],[545,940,1040],[555,940,1050],[565,950,1060],[575,1030,1110],[583,1010,1090],[588,1090,1210],[594,1150,1230],[602,1150,1210],[610,1220,1320],[618,1230,1310],[627,1240,1310],[635,1280,1350],[643,1300,1420],[648,1160,1300],[656,1100,1190],[665,1120,1150],[675,1100,1200],[681,1080,1200],[690,1100,1190],[697,1110,1200],[705,1110,1160],[713,1020,1120],[718,1060,1150],[722,1140,1330],[728,1280,1410],[733,1400,1500],[739,1360,1460],[745,1270,1400],[752,1190,1290],[758,1230,1300],[765,1220,1280],[772,1280,1380],[780,1270,1350],[790,1300,1360],[800,1280,1350],[806,1340,1400],[812,1360,1420],[820,1330,1400],[826,1230,1390],[831,1150,1260],[840,1190,1260],[848,1210,1280],[856,1180,1270],[864,1200,1300],[873,1260,1320],[880,1160,1290],[887,1190,1250],[895,1200,1260],[903,1190,1250],[911,1240,1300],[920,1150,1280],[929,1180,1280],[938,1130,1230],[947,1050,1220],[953,1110,1210],[960,1120,1210],[968,1150,1220],[976,1160,1220],[984,1170,1260],[989,1000,1180],[996,990,1110],[1002,930,1020],[1007,920,990],[1014,940,1010],[1022,960,1000],[1028,960,1050],[1035,910,980],[1041,870,940],[1047,870,980],[1053,970,1080],[1058,1040,1110],[1066,940,1030],[1075,960,1020],[1083,955,1020],[1090,1000,1110],[1098,1000,1060],[1106,1020,1100],[1112,1030,1080],[1120,940,1020],[1128,900,960],[1133,830,900],[1138,780,880],[1145,850,930],[1152,840,890],[1160,850,890],[1168,870,920],[1176,900,1050],[1181,1030,1130],[1187,1010,1110],[1193,1020,1090],[1200,1020,1080],[1206,1040,1090],[1214,1050,1130],[1221,960,1050],[1227,970,1030],[1236,1010,1080],[1243,1030,1090],[1249,1080,1150],[1256,1120,1220],[1263,1200,1270],[1270,1210,1280],[1278,1240,1280],[1286,1270,1330],[1293,1240,1330],[1300,1220,1280],[1308,1190,1240],[1315,1140,1200],[1322,1120,1200],[1328,1030,1180],[1335,1050,1110],[1341,1040,1090],[1345,835,1060],[1352,860,960],[1359,850,890],[1366,845,890],[1373,900,970],[1380,860,940],[1386,900,1000],[1394,910,950],[1400,920,980],[1406,950,1015],[1413,890,950]],
    gaps: [[55,76,1216,1232],[128,164,953,1014],[103,130,981,990],[120,133,991,998],[150,168,1190,1206],[212,248,1137,1197],[288,313,998,1014],[300,316,798,840],[307,318,937,972],[357,375,893,937],[352,367,902,938],[365,378,909,943],[418,436,1076,1083],[444,455,962,989],[528,592,848,858],[580,612,1076,1118],[604,651,1188,1222],[726,740,1406,1422],[739,753,1336,1371],[745,760,1232,1258],[750,768,1241,1257],[776,790,1310,1327],[823,878,1276,1302],[870,884,1276,1293],[932,987,1216,1241],[985,996,1076,1118],[1020,1034,972,1007],[1048,1067,1023,1049],[1081,1098,972,1007],[1089,1106,1050,1058],[1098,1112,1060,1076],[1112,1136,1023,1057],[1129,1146,858,893],[1142,1163,849,867],[1259,1312,1188,1216],[1326,1420,1111,1146]] }
];

let seed = 7;
const rnd = () => (seed = (seed * 16807) % 2147483647) / 2147483647;
const d = { w: "", g: "", r: "" };
const line = (k, x, a, b) => { d[k] += `M${Math.round(x) + 0.5} ${a.toFixed(1)}V${b.toFixed(1)}`; };
let gaps = "";

for (const b of blocks) {
  const pts = b.bars.map(([x, h, l]) => [b.x + x / 3, b.y + h * b.sy, b.y + l * b.sy]);
  pts.forEach(([x, h, l], i) => {
    const prev = pts[i - 1] || [x, h, l];
    const next = pts[i + 1] || [x, h, l];
    const len = l - h;
    const falling = next[1] + next[2] > prev[1] + prev[2];
    const body = rnd() < 0.75 ? (falling ? "r" : "g") : (falling ? "g" : "r");
    line("w", x, h, l);
    line(body, x, h + len * (0.15 + 0.2 * rnd()), l - len * (0.1 + 0.25 * rnd()));
    // the bar between two recorded ones
    const mh = (h + next[1]) / 2, ml = (l + next[2]) / 2, span = ml - mh;
    if (next[0] - x > 1.5) {
      const mx = (x + next[0]) / 2;
      line("w", mx, mh + span * 0.3 * rnd(), ml - span * 0.3 * rnd());
      line(rnd() < 0.5 ? "r" : "g", mx, mh + span * 0.35, mh + span * (0.5 + 0.2 * rnd()));
    }
  });
  for (const [x1, x2, y1, y2] of b.gaps) {
    for (const y of [y1, y2]) gaps += `M${Math.round(b.x + x1 / 3)} ${Math.round(b.y + y * b.sy) + 0.5}H${Math.round(b.x + x2 / 3)}`;
  }
}

document.getElementById("candles").innerHTML = Object.keys(d).map(k => `<path class="k-${k}" d="${d[k]}"/>`).join("");
document.getElementById("gaps").innerHTML = `<path d="${gaps}"/>`;
```
